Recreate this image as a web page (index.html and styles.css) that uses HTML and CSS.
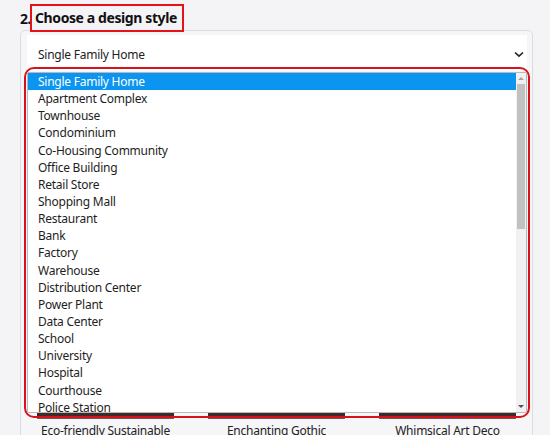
FILE: index.html
```html
<!DOCTYPE html>
<html>
<head>
<meta charset="utf-8">
<link rel="stylesheet" href="styles.css">
</head>
<body>
<div class="page">
  <h2 class="heading"><span class="num">2.</span><span class="hl">Choose a design style</span></h2>
  <div class="card">
    <div class="select">
      <span>Single Family Home</span>
      <svg class="chev" width="10" height="7" viewBox="0 0 10 7"><path d="M1 1.5 L5 5.2 L9 1.5" fill="none" stroke="#222" stroke-width="1.6"/></svg>
    </div>
    <div class="gallery">
      <div class="item"><div class="img"></div><div class="cap">Eco-friendly Sustainable</div></div>
      <div class="item"><div class="img"></div><div class="cap">Enchanting Gothic</div></div>
      <div class="item"><div class="img"></div><div class="cap">Whimsical Art Deco</div></div>
    </div>
    <div class="ring"></div>
    <div class="dropdown">
      <div class="options">
        <div class="opt sel">Single Family Home</div>
        <div class="opt">Apartment Complex</div>
        <div class="opt">Townhouse</div>
        <div class="opt">Condominium</div>
        <div class="opt">Co-Housing Community</div>
        <div class="opt">Office Building</div>
        <div class="opt">Retail Store</div>
        <div class="opt">Shopping Mall</div>
        <div class="opt">Restaurant</div>
        <div class="opt">Bank</div>
        <div class="opt">Factory</div>
        <div class="opt">Warehouse</div>
        <div class="opt">Distribution Center</div>
        <div class="opt">Power Plant</div>
        <div class="opt">Data Center</div>
        <div class="opt">School</div>
        <div class="opt">University</div>
        <div class="opt">Hospital</div>
        <div class="opt">Courthouse</div>
        <div class="opt">Police Station</div>
      </div>
      <div class="scrollbar">
        <div class="arrow up"></div>
        <div class="track"><div class="thumb"></div></div>
        <div class="arrow down"></div>
      </div>
    </div>
  </div>
</div>
</body>
</html>
```
FILE: styles.css
```css
html, body {
  margin: 0;
  padding: 0;
  background: #f4f4f7;
  font-family: "Noto Sans", "Open Sans", sans-serif;
  color: #212121;
  overflow: hidden;
}
.page {
  padding: 4px 0 0 20px;
}
.heading {
  position: relative;
  z-index: 2;
  margin: 0;
  display: flex;
  align-items: center;
  height: 28px;
  font-size: 14px;
  font-weight: 700;
  letter-spacing: -0.4px;
  color: #111;
}
.num {
  width: 10px;
}
.hl {
  box-sizing: border-box;
  height: 28px;
  display: flex;
  align-items: center;
  border: 2px solid #e3121b;
  padding: 0 5px 1px 3px;
}
.card {
  position: relative;
  margin-top: -2px;
  width: 513px;
  height: 420px;
  box-sizing: border-box;
  border: 1px solid #dcdce0;
  border-radius: 5px;
  background: #f6f6f8;
  padding: 4px 5px 0 6px;
}
.select {
  box-sizing: border-box;
  height: 36px;
  background: #fff;
  display: flex;
  align-items: center;
  justify-content: space-between;
  padding: 2px 3px 0 11px;
  font-size: 12px;
  letter-spacing: -0.25px;
  color: #222;
}
.gallery {
  display: flex;
  gap: 34px;
  padding: 6px 0 0 10px;
}
.item {
  width: 137px;
  display: flex;
  flex-direction: column;
  align-items: center;
}
.img {
  width: 137px;
  height: 341px;
  background: linear-gradient(#2e2222, #3d2c2b);
  border-bottom: 1px solid #6a5a58;
}
.cap {
  margin-top: 3px;
  line-height: 17px;
  font-size: 12px;
  letter-spacing: -0.25px;
  white-space: nowrap;
  color: #222;
}
.ring {
  position: absolute;
  left: 3px;
  top: 36px;
  width: 506px;
  height: 351px;
  box-sizing: border-box;
  border: 2px solid #d8121c;
  border-radius: 10px;
  z-index: 1;
}
.dropdown {
  position: absolute;
  left: 6px;
  top: 41px;
  width: 500px;
  height: 341px;
  box-sizing: border-box;
  background: #fff;
  border: 1px solid #b9b9b9;
  display: flex;
  z-index: 2;
}
.options {
  flex: 1;
  overflow: hidden;
}
.opt {
  height: 17.15px;
  line-height: 17px;
  padding-left: 10px;
  font-size: 12px;
  letter-spacing: -0.25px;
  color: #1e1e1e;
  white-space: nowrap;
}
.opt.sel {
  background: #0b95f0;
  color: #fff;
}
.scrollbar {
  width: 10px;
  background: #f1f1f1;
  display: flex;
  flex-direction: column;
}
.arrow {
  height: 11px;
  display: flex;
  align-items: center;
  justify-content: center;
}
.arrow::before {
  content: "";
  width: 0;
  height: 0;
  border-left: 3px solid transparent;
  border-right: 3px solid transparent;
}
.arrow.up::before {
  border-bottom: 3px solid #a3a3a3;
}
.arrow.down::before {
  border-top: 3px solid #505050;
}
.track {
  flex: 1;
  padding: 0 1px;
}
.thumb {
  height: 145px;
  background: #c1c1c1;
}
```
